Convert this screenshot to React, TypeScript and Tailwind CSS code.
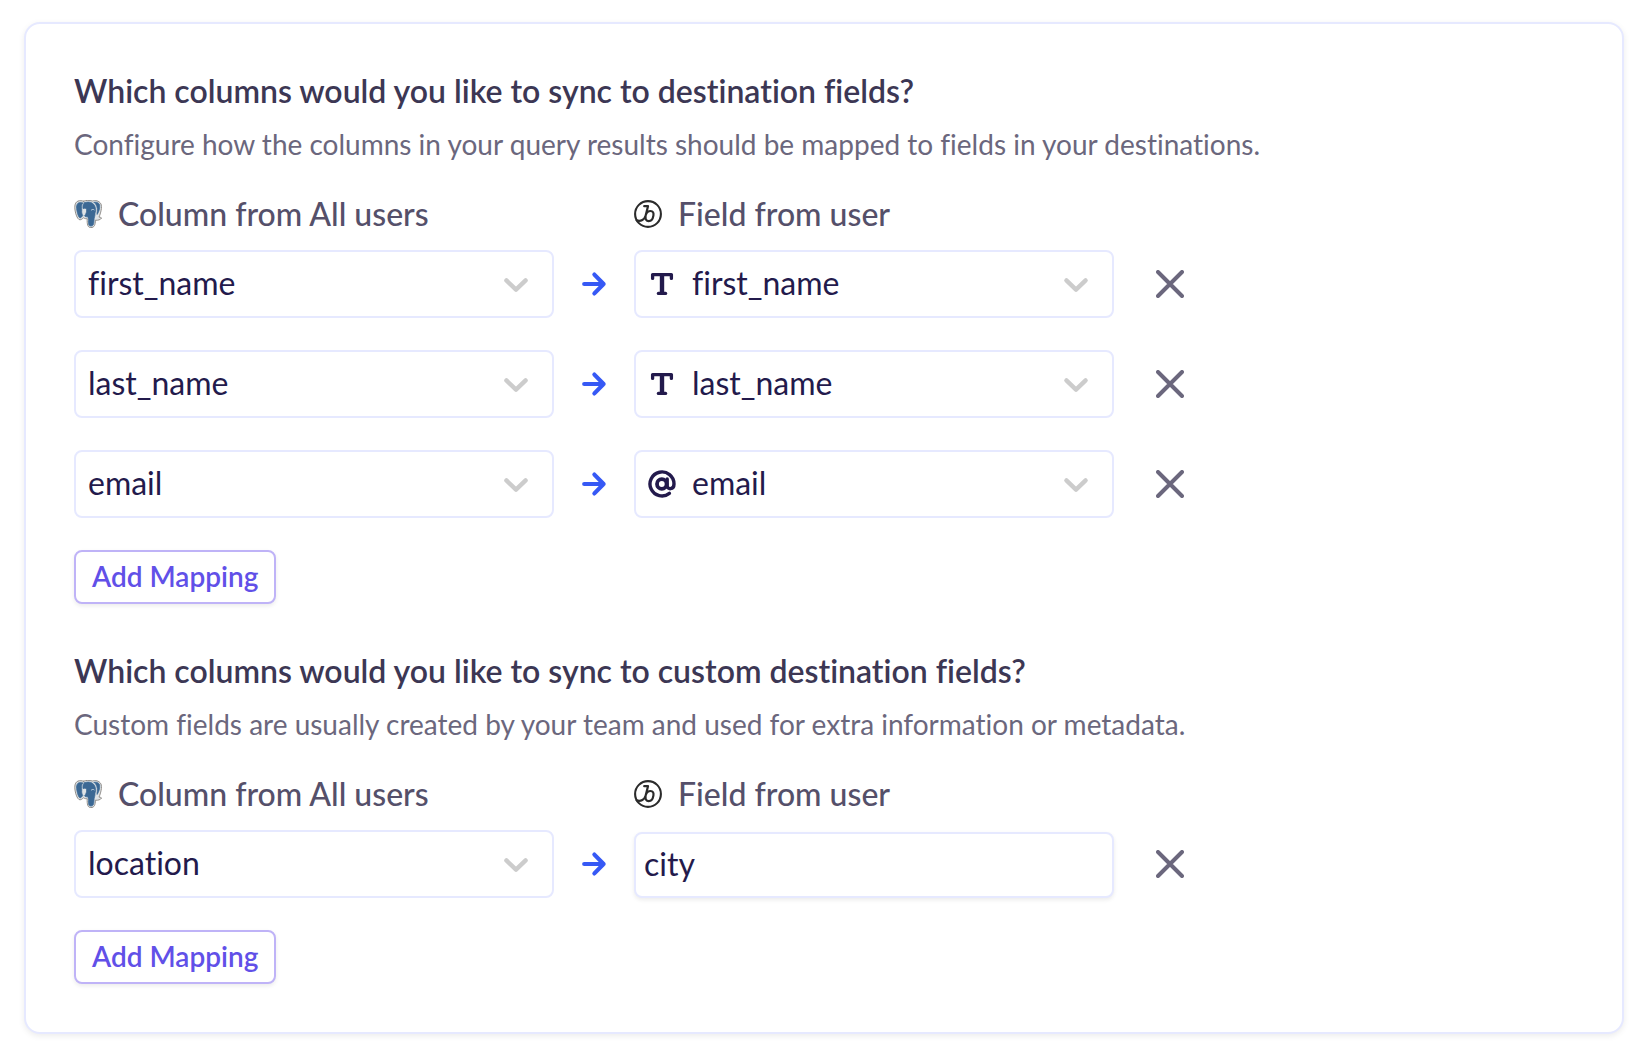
import { useState } from 'react';

type FieldType = 'text' | 'email';

type Mapping = {
  id: number;
  column: string;
  field: string;
  type: FieldType;
};

const COLUMNS = ['first_name', 'last_name', 'email', 'location'];
const FIELDS = ['first_name', 'last_name', 'email'];

export default function App() {
  const [mappings, setMappings] = useState<Mapping[]>([
    { id: 1, column: 'first_name', field: 'first_name', type: 'text' },
    { id: 2, column: 'last_name', field: 'last_name', type: 'text' },
    { id: 3, column: 'email', field: 'email', type: 'email' },
  ]);
  const [custom, setCustom] = useState<Mapping[]>([
    { id: 1, column: 'location', field: 'city', type: 'text' },
  ]);

  const addMapping = () =>
    setMappings([...mappings, { id: Date.now(), column: 'first_name', field: 'first_name', type: 'text' }]);
  const addCustom = () =>
    setCustom([...custom, { id: Date.now(), column: 'location', field: '', type: 'text' }]);

  return (
    <div className="min-h-screen bg-white px-6 py-[22px] font-[Lato,'Open_Sans',sans-serif] [font-variant-ligatures:none]">
      <main className="space-y-12 rounded-2xl border-2 border-[#e6e9ff] bg-white p-12 shadow-[0_2px_6px_rgba(0,0,0,0.08)]">
        <Section
          title="Which columns would you like to sync to destination fields?"
          description="Configure how the columns in your query results should be mapped to fields in your destinations."
          onAdd={addMapping}
        >
          {mappings.map(m => (
            <Row key={m.id} onRemove={() => setMappings(mappings.filter(x => x.id !== m.id))}>
              <Select
                label="Column"
                value={m.column}
                options={COLUMNS}
                onChange={(v: string) => setMappings(mappings.map(x => (x.id === m.id ? { ...x, column: v } : x)))}
              />
              <ArrowIcon />
              <Select
                label="Field"
                value={m.field}
                options={FIELDS}
                type={m.type}
                onChange={(v: string) =>
                  setMappings(
                    mappings.map(x => (x.id === m.id ? { ...x, field: v, type: v === 'email' ? 'email' : 'text' } : x))
                  )
                }
              />
            </Row>
          ))}
        </Section>

        <Section
          title="Which columns would you like to sync to custom destination fields?"
          description="Custom fields are usually created by your team and used for extra information or metadata."
          onAdd={addCustom}
        >
          {custom.map(m => (
            <Row key={m.id} onRemove={() => setCustom(custom.filter(x => x.id !== m.id))}>
              <Select
                label="Column"
                value={m.column}
                options={COLUMNS}
                onChange={(v: string) => setCustom(custom.map(x => (x.id === m.id ? { ...x, column: v } : x)))}
              />
              <ArrowIcon />
              <input
                type="text"
                aria-label="Custom field"
                value={m.field}
                onChange={e => setCustom(custom.map(x => (x.id === m.id ? { ...x, field: e.target.value } : x)))}
                className="h-[66px] w-full self-end rounded-lg border-2 border-[#e6e9ff] bg-white px-2 pb-1 text-[32px] text-[#231a4c] shadow-[0_2px_4px_rgba(0,0,0,0.08)] outline-none"
              />
            </Row>
          ))}
        </Section>
      </main>
    </div>
  );
}

function Section({ title, description, onAdd, children }: any) {
  return (
    <section>
      <h2 className="text-[32px] leading-[38px] font-semibold text-[#3c3754]">{title}</h2>
      <p className="mt-3.5 text-[28px] leading-10 text-[#6b677d]">{description}</p>
      <div className="mt-[30px] mb-4 grid max-w-[1124px] grid-cols-[1fr_80px_1fr_84px] items-center text-[32px] leading-10 font-medium text-[#55506a]">
        <div className="flex items-center gap-4">
          <PostgresIcon />
          <span>Column from All users</span>
        </div>
        <div className="col-start-3 flex items-center gap-4">
          <BrazeIcon />
          <span>Field from user</span>
        </div>
      </div>
      <div className="space-y-8">{children}</div>
      <button
        onClick={onAdd}
        className="mt-8 h-[54px] rounded-lg border-2 border-[#bfb3f7] bg-white px-4 pb-0.5 text-[28px] leading-10 font-semibold text-[#6150e8] shadow-[0_2px_4px_rgba(0,0,0,0.08)]"
      >
        Add Mapping
      </button>
    </section>
  );
}

function Row({ onRemove, children }: any) {
  return (
    <div className="grid max-w-[1124px] grid-cols-[1fr_80px_1fr_84px] items-center">
      {children}
      <button onClick={onRemove} aria-label="Remove mapping" className="ml-auto p-3.5">
        <svg className="h-7 w-7" viewBox="0 0 28 28" fill="none" stroke="#6b677d" strokeWidth="4" strokeLinecap="round">
          <path d="M2 2l24 24M26 2L2 26" />
        </svg>
      </button>
    </div>
  );
}

function Select({ label, value, options, type, onChange }: any) {
  return (
    <div className="relative">
      {type && (
        <span className="pointer-events-none absolute inset-y-0 left-3 flex items-center">
          {type === 'email' ? <AtIcon /> : <TextIcon />}
        </span>
      )}
      <select
        aria-label={label}
        value={value}
        onChange={e => onChange(e.target.value)}
        className={`h-[68px] w-full appearance-none rounded-lg border-2 border-[#e6e9ff] bg-white pr-16 pb-0.5 text-[32px] text-[#231a4c] outline-none ${type ? 'pl-14' : 'pl-3'}`}
      >
        {options.map((o: string) => (
          <option key={o}>{o}</option>
        ))}
      </select>
      <svg
        className="pointer-events-none absolute inset-y-0 right-6 my-auto h-7 w-7"
        viewBox="0 0 28 28"
        fill="none"
        stroke="#cccccc"
        strokeWidth="4.4"
        strokeLinecap="round"
        strokeLinejoin="round"
      >
        <path d="M4.4 10.4l9.6 9.2 9.6-9.2" />
      </svg>
    </div>
  );
}

function ArrowIcon() {
  return (
    <svg
      className="mx-auto h-7 w-7"
      viewBox="0 0 28 28"
      fill="none"
      stroke="#3659f5"
      strokeWidth="4.2"
      strokeLinecap="round"
      strokeLinejoin="round"
    >
      <path d="M4.2 14h19.4M14.4 4.6l9.200 9.400-9.200 9.400" />
    </svg>
  );
}

function TextIcon() {
  return (
    <svg className="h-8 w-8" viewBox="0 0 32 32" fill="none" stroke="#231a4c" strokeLinecap="round" strokeLinejoin="round">
      <path d="M6.6 10.4V6.6h18.8v3.8" strokeWidth="3.3" />
      <path d="M16 7v18" strokeWidth="4.4" strokeLinecap="butt" />
      <path d="M12.4 25.4h7.2" strokeWidth="3.3" />
    </svg>
  );
}

function AtIcon() {
  return (
    <svg className="h-8 w-8" viewBox="0 0 32 32" fill="none" stroke="#231a4c" strokeWidth="3.4" strokeLinecap="round">
      <circle cx="15.8" cy="16" r="4.8" strokeWidth="3.8" />
      <path d="M21.2 11v6.4c0 4.8 6.8 4.4 6.8-1.4a12 12 0 1 0-4.600 9.400" />
    </svg>
  );
}

function PostgresIcon() {
  return (
    <svg className="h-7 w-7" viewBox="0 0 28 28" strokeLinecap="round" strokeLinejoin="round">
      <path
        d="M9.6 1.2C6.2 0 .8.1.8 7.2c0 4.4 2.2 12.6 5.2 12.6 1.3 0 2.4-1.2 3.6-2 1 .9 2.2.9 3.6.9-.2 5.4.4 8.9 3.6 8.9 3.6 0 4.5-2.7 4.6-7.4 2.6.3 5.2-.5 6.2-2.2-.6-.9-1.6-.5-2.600-.9C26.6 13.6 28.4 6.7 26.9 3.9 25.1.6 21.2.1 18.4 1 15.3.1 12.3.1 9.6 1.2z"
        fill="#dfe3e6"
        stroke="#918e8a"
        strokeWidth="1"
      />
      <g fill="#3b6894" stroke="#3b6894" strokeWidth="0.7">
        <path d="M8.8 3C5.9 1.6 2.700 2.500 2.500 7c0 3.600 1.800 10.900 3.600 10.900 1 0 2.100-1.600 2.700-2.500-1-1.500-1.300-3.400-1-5.400C7.200 7.500 7.300 5 8.800 3z" />
        <path d="M10.600 2.700c2.200-.9 4.800-.9 7 0 2.900 1.500 4.200 4.300 4 8.300-.7 1.500-.5 3-.7 4.600-.7 1.800-.9 4-1 6.200-.1 2.800-1 4.300-3 4.300-2 0-2.400-1.500-2.400-4 0-2 .2-4-.9-5.400-1.200.3-2.400 0-3-.8 1.300-2 2.400-4.200 1.900-6.500-.6-1.300-2-1.300-3.500-.7C8.600 6.400 9 4 10.600 2.700z" />
        <path d="M20.200 2.300c2.600-.5 5 .4 5.500 2.900.4 3-.8 6.700-2.600 9.300-.4-1 0-2 .1-3.300.5-3.500-.7-6.600-3-8.900z" />
      </g>
      <path d="M17.400 10c.8-.8 2-.8 2.700-.2" fill="none" stroke="#c3d0dc" strokeWidth="1" />
    </svg>
  );
}

function BrazeIcon() {
  return (
    <svg className="h-7 w-7" viewBox="0 0 28 28" fill="none" stroke="#2b2b2b" strokeLinecap="round" strokeLinejoin="round">
      <circle cx="14" cy="14" r="12.9" strokeWidth="2.1" />
      <path
        d="M10.2 6.2h3.8l-2.4 9.6c-.9 3.500-4.800 6.200-9 4.500M11.800 15c1-2.800 2.800-4 4.700-4 2.400 0 3.400 1.900 2.900 4.600-.5 3-2.300 5.500-4.700 5.500-2.500 0-3.500-2-3.100-4.600"
        strokeWidth="2.2"
      />
    </svg>
  );
}
